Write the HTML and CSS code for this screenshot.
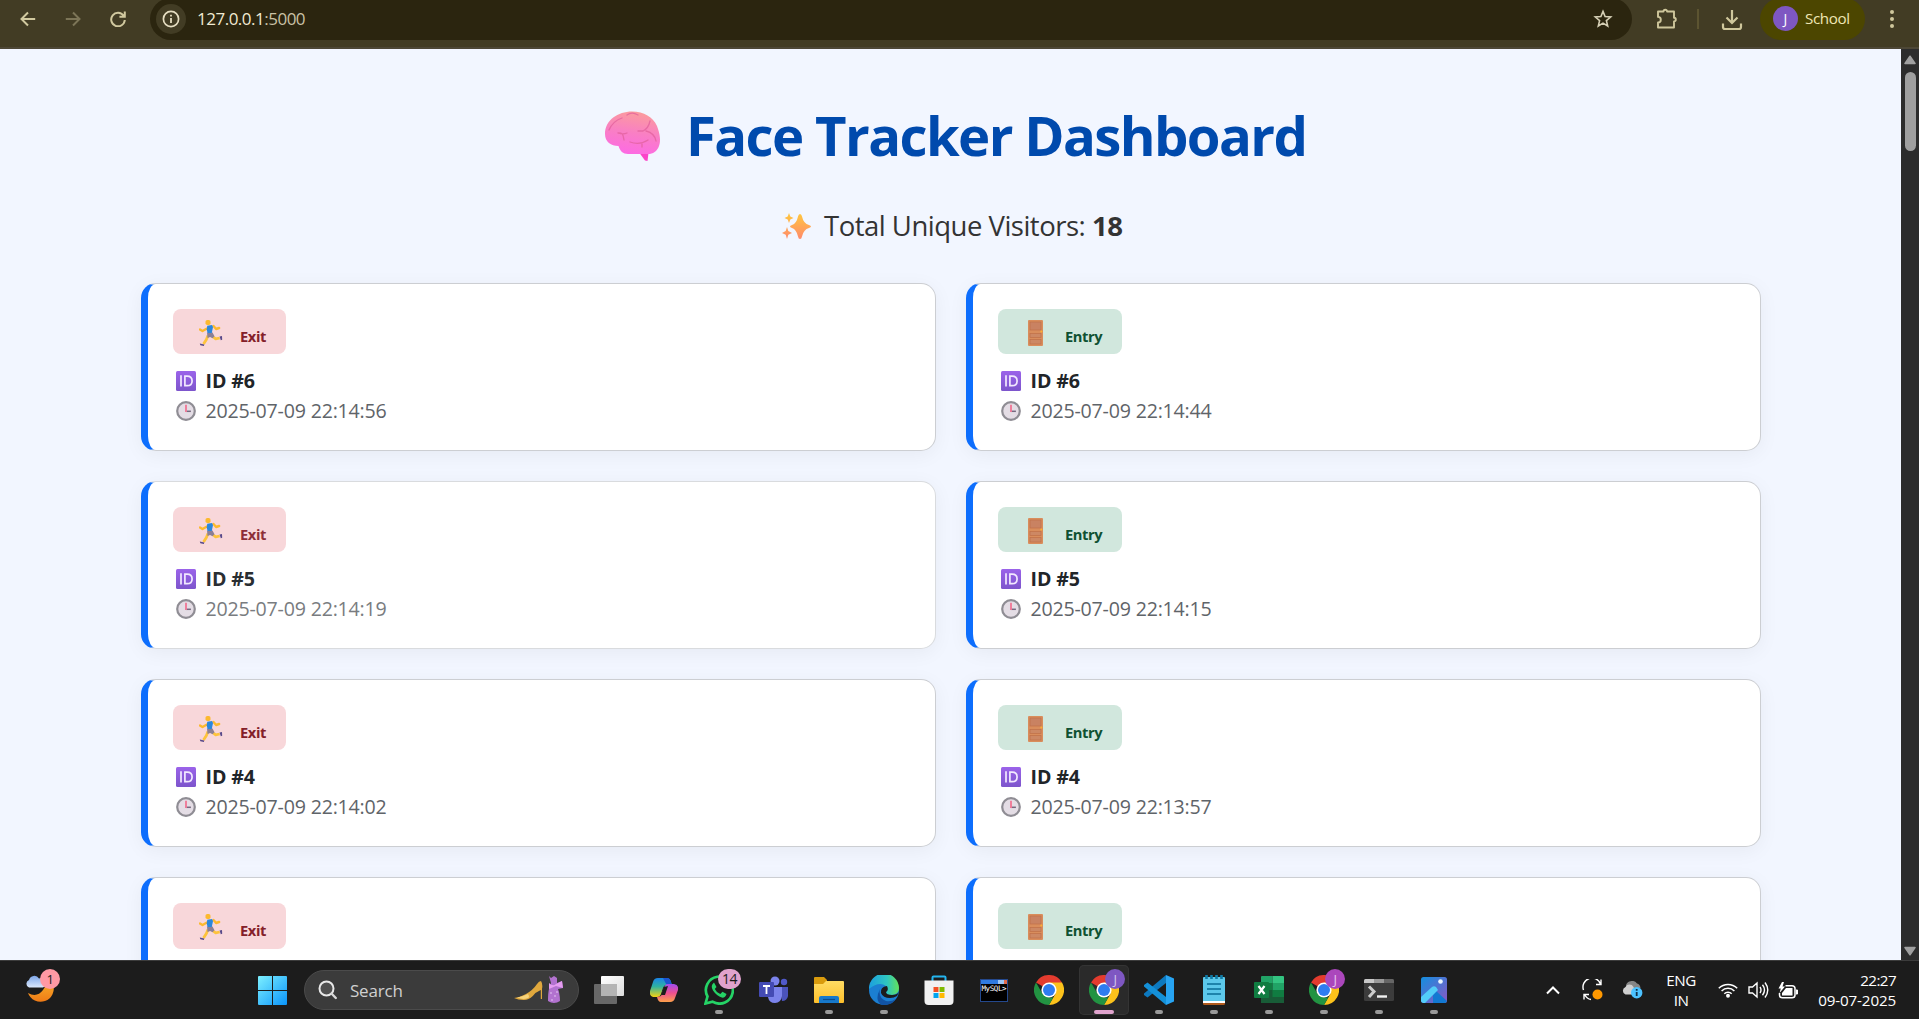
FILE: index.html
```html
<!DOCTYPE html>
<html lang="en">
<head>
<meta charset="utf-8">
<title>Face Tracker Dashboard</title>
<link rel="stylesheet" href="styles.css">
</head>
<body>
<svg class="defs" width="0" height="0" aria-hidden="true">
  <defs>
    <linearGradient id="gBrain" x1=".6" y1="0" x2=".4" y2="1"><stop offset="0" stop-color="#fb9c9c"/><stop offset=".5" stop-color="#f97fc4"/><stop offset="1" stop-color="#fd6ae4"/></linearGradient>
    <linearGradient id="gSpark" x1="0" y1="0" x2="0" y2="1"><stop offset="0" stop-color="#ffc83d"/><stop offset="1" stop-color="#ff8a6c"/></linearGradient>
    <linearGradient id="gId" x1="0" y1="0" x2="0" y2="1"><stop offset="0" stop-color="#9b63ea"/><stop offset="1" stop-color="#7d55cc"/></linearGradient>
    <linearGradient id="gWin" x1="0" y1="0" x2="1" y2="1"><stop offset="0" stop-color="#7df0ff"/><stop offset="1" stop-color="#0a94fa"/></linearGradient>
    <linearGradient id="gMoon" x1="0" y1="0" x2="0" y2="1"><stop offset="0" stop-color="#f7b32b"/><stop offset="1" stop-color="#ef7a16"/></linearGradient>
    <linearGradient id="gCloud" x1="0" y1="0" x2="0" y2="1"><stop offset="0" stop-color="#7fa8ea"/><stop offset="1" stop-color="#dbe8fb"/></linearGradient>
    <linearGradient id="gCopA" x1="0" y1="0" x2="0" y2="1"><stop offset="0" stop-color="#1a84e8"/><stop offset=".45" stop-color="#2fb3a0"/><stop offset="1" stop-color="#f5d312"/></linearGradient>
    <linearGradient id="gCopB" x1="0" y1="0" x2="0" y2="1"><stop offset="0" stop-color="#a14cf0"/><stop offset=".5" stop-color="#ee4f8f"/><stop offset="1" stop-color="#fda04a"/></linearGradient>
    <linearGradient id="gFold" x1="0" y1="0" x2="0" y2="1"><stop offset="0" stop-color="#ffdc63"/><stop offset="1" stop-color="#fdbf2b"/></linearGradient>
    <linearGradient id="gEdgeA" x1="0" y1="0" x2="1" y2="0"><stop offset="0" stop-color="#1c9fdf"/><stop offset=".6" stop-color="#2fc6c0"/><stop offset="1" stop-color="#63e25a"/></linearGradient>
    <linearGradient id="gPhoto" x1="0" y1="0" x2="1" y2="1"><stop offset="0" stop-color="#138fdf"/><stop offset="1" stop-color="#8b57c4"/></linearGradient>
    <linearGradient id="gView" x1="0" y1="0" x2="1" y2="1"><stop offset="0" stop-color="#fff"/><stop offset="1" stop-color="#dcdcdc"/></linearGradient>
    <symbol id="runner" viewBox="0 0 24 26">
      <path d="M8 8.500 3.500 11 1 9.500M14.500 6l2.600 3 3-1" fill="none" stroke="#fcb92f" stroke-width="2.400" stroke-linecap="round" stroke-linejoin="round"/>
      <path d="M9 15.500 7.400 19.500 4.500 24M13.500 16.500l3.200 2.400 4-.9" fill="none" stroke="#fdc33c" stroke-width="2.800" stroke-linejoin="round"/>
      <path d="M8 12.500h5.500l2 3.800-2 2-2.400-1.200-2.600.8z" fill="#8b7f96"/>
      <path d="M8.300 5.800 13 5 14 7 12.800 13H8.600L7.700 9.600z" fill="#2b87dc"/>
      <rect x="6.500" y="0" width="5" height="5" rx="1.800" fill="#fcb92f"/>
      <path d="M.8 23.400l4.500 1-.4 1.600-3.600-.8zM20.600 16.600l2.400-.6.200 3.700-1.400.5z" fill="#594a8a"/>
    </symbol>
    <symbol id="door" viewBox="0 0 15 26">
      <rect width="15" height="26" rx="1" fill="#d98d5c"/>
      <rect x="2" y="2" width="11" height="8" fill="#c98262" stroke="#bf7048" stroke-width=".7"/>
      <rect x="2" y="13.500" width="11" height="4" fill="#cd8864" stroke="#bf7048" stroke-width=".7"/>
      <rect x="2" y="19.500" width="11" height="4.500" fill="#cd8864" stroke="#bf7048" stroke-width=".7"/>
      <circle cx="13.300" cy="11.500" r="1" fill="#ffb02e"/>
    </symbol>
    <symbol id="idmark" viewBox="0 0 20 20">
      <rect width="20" height="20" rx="1.500" fill="url(#gId)"/>
      <path d="M5 4.300v11.200M8.900 5.100v9.600h2.200c3.600 0 5-2 5-4.800s-1.400-4.800-5-4.800z" fill="none" stroke="#f2e9ff" stroke-width="1.700"/>
    </symbol>
    <symbol id="clock" viewBox="0 0 20 20">
      <circle cx="10" cy="10" r="8.800" fill="#e4dde5" stroke="#8f8d94" stroke-width="2.200"/>
      <path d="M9.500 10.300h5.400" stroke="#75697f" stroke-width="1.500"/><path d="M10 11V3.800" stroke="#f07a98" stroke-width="1.900"/>
    </symbol>
    <symbol id="chrome" viewBox="0 0 30 30">
      <path d="M15 15 2 7.500A15 15 0 0 1 28 7.500z" fill="#e33b2e"/>
      <path d="M15 7.500H28A15 15 0 0 1 15 30L21.500 18.700z" fill="#fcc21b"/>
      <path d="M15 30A15 15 0 0 1 2 7.500L8.500 18.700 15 22.500h4.300z" fill="#229342"/>
      <circle cx="15" cy="15" r="7.600" fill="#fff"/><circle cx="15" cy="15" r="6" fill="#2f7cf0"/>
    </symbol>
  </defs>
</svg>

<header class="toolbar">
  <nav class="nav">
    <svg width="16" height="16" viewBox="0 0 16 16" class="stroke"><path d="M15.200 8H1.800M8 1.500 1.500 8 8 14.500"/></svg>
    <svg width="16" height="16" viewBox="0 0 16 16" class="stroke dim"><path d="M.8 8h13.400M8 1.500 14.500 8 8 14.500"/></svg>
    <svg width="16" height="16" viewBox="0 0 16 16" class="stroke"><path d="M13.600 4.600A6.800 6.800 0 1 0 14.800 9M14.800.6v5.200H9.400"/></svg>
  </nav>
  <div class="address">
    <span class="info"><svg width="18" height="18" viewBox="0 0 18 18"><circle cx="9" cy="9" r="7.600" fill="none" stroke="#e6dec2" stroke-width="1.700"/><path d="M9 8v5M9 4.800v1.800" stroke="#e6dec2" stroke-width="1.800"/></svg></span>
    <span class="url">127.0.0.1<span>:5000</span></span>
    <svg class="star" width="20" height="20" viewBox="0 0 20 20"><path d="m10 2.400 2.100 5.100 5.600.5-4.300 3.600 1.300 5.400L10 14.100 5.300 17l1.300-5.400L2.300 8l5.600-.5z" fill="none" stroke="#d5cfb5" stroke-width="1.600"/></svg>
  </div>
  <svg class="puzzle" width="22" height="22" viewBox="0 0 22 22"><path d="M2 3.500h5.500a1.800 1.800 0 0 1 3.600 0H18v6.300a1.800 1.800 0 0 1 0 3.600V19.500H2v-5a2.800 2.800 0 0 0 0-5.600z" fill="none" stroke="#cfc79c" stroke-width="1.900" stroke-linejoin="round"/></svg>
  <i class="divider"></i>
  <svg class="download" width="22" height="22" viewBox="0 0 22 22"><path d="M11 1v12.500M5.500 8.500 11 14l5.500-5.500M2 14.500V18q0 2 2 2h14q2 0 2-2v-3.500" fill="none" stroke="#cfc79c" stroke-width="2.200"/></svg>
  <div class="profile"><span class="avatar">J</span><span class="profile-name">School</span></div>
  <svg class="more" width="4" height="20" viewBox="0 0 4 20" fill="#cfc79c"><circle cx="2" cy="3" r="2"/><circle cx="2" cy="10" r="2"/><circle cx="2" cy="17" r="2"/></svg>
</header>

<div class="viewport">
  <main class="page">
    <h1 class="title">
      <svg width="56" height="50" viewBox="0 0 56 50"><path d="M34.500 42h9l-1 8-2.500-.5z" fill="#fb45c8"/><path d="M27 .5C39 .5 48 6 52 15c3 8 4 15 2 20-2 5.500-6 8-11 8H23c-5 0-8-3-9.500-8C6 35 0 31 0 23 0 9 13 .5 27 .5z" fill="url(#gBrain)"/><g fill="none" stroke="#e2609c" stroke-width="1.300" stroke-linecap="round" opacity=".75"><path d="M4 19c3-7 7-10 13-12M13 22c5 0 5 1 6 7M13 22c3 1 7 1 9 0M22 4c4-3 7-2 11 0M45 10c-1 5-3 8-7 10h-5M41 20c4 1 9 4 10 10M25 31c6 2 12 2 18-2M37 33v3"/></g></svg>
      <span>Face Tracker Dashboard</span>
    </h1>
    <p class="visitors">
      <svg width="29" height="27" viewBox="0 0 29 27" fill="url(#gSpark)"><path d="M18 1q1.500 0 2 2.500 1.500 7 7 8.500 2 .6 2 1.500t-2 1.500q-5.500 1.500-7 8.500-.5 2.500-2 2.500t-2-2.500q-1.500-7-6-8.500-2-.6-2-1.500t2-1.500q4.500-1.500 6-8.500Q16.500 1 18 1zM7 0l1.300 3.500L11.500 5 8.300 6.500 7 10 5.700 6.500 2.500 5l3.200-1.500zM5 14l1.300 4L10 20l-3.700 1.800L5 26l-1.300-4.200L0 20l3.700-2z"/></svg>
      <span>Total Unique Visitors: <b>18</b></span>
    </p>
    <section class="grid">
      <article class="card"><div class="badge exit"><svg width="24" height="26"><use href="#runner"/></svg><b>Exit</b></div><div class="line id"><svg width="20" height="20"><use href="#idmark"/></svg><b>ID #6</b></div><div class="line time"><svg width="20" height="20"><use href="#clock"/></svg><span>2025-07-09 22:14:56</span></div></article>
      <article class="card"><div class="badge entry"><svg width="15" height="26"><use href="#door"/></svg><b>Entry</b></div><div class="line id"><svg width="20" height="20"><use href="#idmark"/></svg><b>ID #6</b></div><div class="line time"><svg width="20" height="20"><use href="#clock"/></svg><span>2025-07-09 22:14:44</span></div></article>
      <article class="card fading"><div class="badge exit"><svg width="24" height="26"><use href="#runner"/></svg><b>Exit</b></div><div class="line id"><svg width="20" height="20"><use href="#idmark"/></svg><b>ID #5</b></div><div class="line time"><svg width="20" height="20"><use href="#clock"/></svg><span>2025-07-09 22:14:19</span></div></article>
      <article class="card"><div class="badge entry"><svg width="15" height="26"><use href="#door"/></svg><b>Entry</b></div><div class="line id"><svg width="20" height="20"><use href="#idmark"/></svg><b>ID #5</b></div><div class="line time"><svg width="20" height="20"><use href="#clock"/></svg><span>2025-07-09 22:14:15</span></div></article>
      <article class="card"><div class="badge exit"><svg width="24" height="26"><use href="#runner"/></svg><b>Exit</b></div><div class="line id"><svg width="20" height="20"><use href="#idmark"/></svg><b>ID #4</b></div><div class="line time"><svg width="20" height="20"><use href="#clock"/></svg><span>2025-07-09 22:14:02</span></div></article>
      <article class="card"><div class="badge entry"><svg width="15" height="26"><use href="#door"/></svg><b>Entry</b></div><div class="line id"><svg width="20" height="20"><use href="#idmark"/></svg><b>ID #4</b></div><div class="line time"><svg width="20" height="20"><use href="#clock"/></svg><span>2025-07-09 22:13:57</span></div></article>
      <article class="card"><div class="badge exit"><svg width="24" height="26"><use href="#runner"/></svg><b>Exit</b></div></article>
      <article class="card"><div class="badge entry"><svg width="15" height="26"><use href="#door"/></svg><b>Entry</b></div></article>
    </section>
  </main>
  <aside class="scrollbar">
    <svg width="12" height="10" viewBox="0 0 12 10"><path d="M6 1.200 11 8.500H1z" fill="#a0a0a0" stroke="#a0a0a0" stroke-linejoin="round" stroke-width="1.500"/></svg>
    <i class="thumb"></i>
    <svg class="down" width="12" height="10" viewBox="0 0 12 10"><path d="M6 8.800 11 1.500H1z" fill="#a0a0a0" stroke="#a0a0a0" stroke-linejoin="round" stroke-width="1.500"/></svg>
  </aside>
</div>

<footer class="taskbar">
  <div class="weather">
    <svg width="30" height="30" viewBox="0 0 30 30"><path d="M28 10A12.500 12.500 0 1 1 3 19q9 5 15-3 4-5 2-11z" fill="url(#gMoon)"/><path d="M4 13.500a4 4 0 0 1 0-7.500 5.500 5.500 0 0 1 10-1.500 4.500 4.500 0 0 1 4 9z" fill="url(#gCloud)"/></svg>
    <span class="count pink">1</span>
  </div>
  <svg class="start" width="29" height="29" viewBox="0 0 29 29"><path d="M0 1q0-1 1-1h13v14H0zM15 0h13q1 0 1 1v13H15zM0 15h14v14H1q-1 0-1-1zM15 15h14v13q0 1-1 1H15z" fill="url(#gWin)"/></svg>
  <div class="search">
    <svg width="19" height="20" viewBox="0 0 19 20"><circle cx="8.500" cy="8.500" r="7" fill="#505050" stroke="#e8e8e8" stroke-width="2"/><path d="m13.500 13.500 4.300 4.500" stroke="#d8d8d8" stroke-width="2.400" stroke-linecap="round"/></svg>
    <span>Search</span>
    <svg class="gifts" width="50" height="30" viewBox="0 0 50 30"><path d="M0 23q7-1 12-4 7-4 11-10 2-3 4-3 2 3 1 8v10h-1.200V15q-5 2-8 6-4 4-9 4-6 0-10-2z" fill="#e0a83d"/><path d="M3 22.500q6-1 11-3.500 2 3 0 4-5 2-11-.5z" fill="#f6d27a"/><path d="M35 1l2 2 3-2 3 2v5l5-2 1 7-5 1 1 3q1 5 1 9-6 4-12 0 0-8 1-12l2-6z" fill="#b272cf"/><path d="M35 8q4 4 7 1l6-3 1 7-7-2-7 3z" fill="#e59df0"/><g fill="#ead0f5"><circle cx="37" cy="18" r=".8"/><circle cx="41" cy="21" r=".8"/><circle cx="38" cy="25" r=".8"/><circle cx="43" cy="17" r=".8"/></g></svg>
  </div>
  <div class="apps">
    <div class="app"><svg width="30" height="28" viewBox="0 0 30 28"><rect x="7" y="0" width="23" height="20" rx="1" fill="url(#gView)"/><path d="M0 9q0-1 1-1h6v11q0 1 1 1h15v7q0 1-1 1H1q-1 0-1-1z" fill="#686868"/><path d="M7 8h16v12H7z" fill="#b4b4b4"/></svg></div>
    <div class="app"><svg width="28" height="26" viewBox="0 0 28 26"><path d="M8 1h9q3 0 4 4l1 3h-5q-3 0-4 3l-2 6q-1 3-4 3H3q-4-1-3-6L3 5q1-4 5-4z" fill="url(#gCopA)"/><path d="M13 1h4q3 0 4 4l1 3h-4q-2 0-3-3z" fill="#1b54d0"/><path d="M20 25h-9q-3 0-4-5l4-1 3-8q1-4 4-4h6q5 1 4 6l-3 8q-1 4-5 4z" fill="url(#gCopB)"/><path d="M14 10l4-1-3 9h-4z" fill="#1c1c1c"/></svg></div>
    <div class="app open"><svg width="30" height="30" viewBox="0 0 30 30"><path d="M1.500 28.500 3.500 21.500A13.500 13.500 0 1 1 8.500 26.700z" fill="none" stroke="#25d366" stroke-width="2.700"/><path d="M10 7.500q-4 3-1 8 4 6 9.500 7.200 3 0 4-3.700l-4-2.300-2.200 2.400q-4-1.800-5.500-5.200l1.700-2z" fill="#25d366"/></svg><span class="count rose">14</span></div>
    <div class="app"><svg width="30" height="28" viewBox="0 0 30 28"><circle cx="16" cy="5" r="4.500" fill="#7b83eb"/><circle cx="25" cy="6" r="3.200" fill="#5059c9"/><path d="M21 11h8v9q-1 5-6 5z" fill="#4b53bc"/><path d="M9 11h14v9q-1 7-7 7t-7-6z" fill="#7b83eb"/><rect x="0" y="6" width="15" height="15" rx="1" fill="#444bb4"/><path d="M4 10h7M7.500 10v8" stroke="#fff" stroke-width="1.800"/></svg></div>
    <div class="app open"><svg width="30" height="28" viewBox="0 0 30 28"><path d="M0 2q0-1 1-1h9l3 3v5H0z" fill="#d99b0d"/><path d="M0 8h9l3-3h17q1 0 1 1v20q0 1-1 1H1q-1 0-1-1z" fill="url(#gFold)"/><path d="M5 27v-5q0-2 2-2h16q2 0 2 2v5z" fill="#1779cb"/><path d="M9 23.500h12" stroke="#0c4c8c" stroke-width="1.200"/></svg></div>
    <div class="app open"><svg width="30" height="30" viewBox="0 0 30 30"><circle cx="15" cy="15" r="15" fill="#1b7fd2"/><path d="M0 14A15 15 0 0 1 30 13q0 6-7 7-6 0-6-3 3-3 0-6-7-5-17 3z" fill="url(#gEdgeA)"/><path d="M11 14q-2 9 6 12 5 1 10-2-5 7-14 6Q5 26 11 14z" fill="#1153a4"/><path d="M18 11q-7 1-6 7 2 5 9 5 4 0 7-2l2-4q-2 3-7 3-6 0-6-3 3-2 1-6z" fill="#1c1c1c"/></svg></div>
    <div class="app"><svg class="store" width="30" height="30" viewBox="0 0 30 30"><path d="M8.500 6V2.500q0-1 1-1h11q1 0 1 1V6" fill="none" stroke="#24b5ef" stroke-width="2"/><path d="M.5 5.500h29V26q0 4-4 4h-21q-4 0-4-4z" fill="#f1f1f1"/><path d="M9.500 12h5v5h-5z" fill="#f25022"/><path d="M15.500 12h5v5h-5z" fill="#7fba00"/><path d="M9.500 18h5v5h-5z" fill="#00a4ef"/><path d="M15.500 18h5v5h-5z" fill="#ffb900"/></svg></div>
    <div class="app"><span class="mysql"><i></i><span>MySQL&gt;</span></span></div>
    <div class="app"><svg width="30" height="30"><use href="#chrome"/></svg></div>
    <div class="app open active"><svg width="30" height="30"><use href="#chrome"/></svg><span class="count violet">J</span></div>
    <div class="app open"><svg width="30" height="30" viewBox="0 0 30 30"><path d="M22 0v8L3.500 22.500 0 20v-1.500z" fill="#0d79bf"/><path d="M22 30v-8L3.500 7.500 0 10v1.500z" fill="#1490d8"/><path d="M22 0 30 3.500v23L22 30z" fill="#27a4f2"/></svg></div>
    <div class="app open"><svg width="22" height="30" viewBox="0 0 22 30"><rect y="20" width="22" height="10" rx="1.500" fill="#b05a1c"/><rect y="18" width="22" height="10" fill="#fff"/><path d="M0 3q0-1 1-1h20q1 0 1 1v23H0z" fill="#5cc8ea"/><path d="M4 9h14M4 14h14M4 19h14" stroke="#0a6e96" stroke-width="1.700"/><path d="M3.500 0v4M8.500 0v4M13.500 0v4M18.500 0v4" stroke="#0f7ba6" stroke-width="2.600"/></svg></div>
    <div class="app open"><svg width="30" height="28" viewBox="0 0 30 28"><path d="M7 1q0-1 1-1h10.500v7H7z" fill="#21a366"/><path d="M18.500 0H29q1 0 1 1v6H18.500z" fill="#33c481"/><path d="M7 7h11.500v7H7z" fill="#107c41"/><path d="M18.500 7H30v7H18.500z" fill="#21a366"/><path d="M7 14h23v13H7z" fill="#185c37"/><path d="M18.500 14H30v7H18.500z" fill="#107c41"/><rect y="6" width="15" height="16" rx="1" fill="#107c41"/><path d="m4.500 10 6 8M10.500 10l-6 8" stroke="#fff" stroke-width="2.200"/></svg></div>
    <div class="app open"><svg width="30" height="30"><use href="#chrome"/></svg><span class="count purple">J</span></div>
    <div class="app open"><svg width="30" height="22" viewBox="0 0 30 22"><rect width="30" height="22" rx="1.500" fill="#3c3c3c"/><path d="M0 4V1.500Q0 0 1.500 0H10v4z" fill="#c8c8c8"/><path d="M10 0h10v4H10z" fill="#9a9a9a"/><path d="M20 0h8.500Q30 0 30 1.500V4H20z" fill="#666"/><path d="m5 7.500 5 5-5 5.500" fill="none" stroke="#ccc" stroke-width="3"/><path d="M13 17.500h10" stroke="#f2f2f2" stroke-width="2.400"/></svg></div>
    <div class="app open"><svg width="26" height="26" viewBox="0 0 26 26"><rect width="26" height="26" rx="2.500" fill="url(#gPhoto)"/><path d="m12 18 3-4 11 10q-1 2-2 2H12z" fill="#1278d2"/><path d="M0 20 11 10q2-1.500 4 0l2 3L4 26H2q-2-1-2-2z" fill="#52cdf9"/><circle cx="19.500" cy="4.500" r="2.300" fill="#e9f6ff"/></svg></div>
  </div>
  <div class="tray">
    <svg class="chev" width="14" height="9" viewBox="0 0 14 9"><path d="m1 7.500 6-6 6 6" fill="none" stroke="#fff" stroke-width="2"/></svg>
    <svg class="sync" width="22" height="22" viewBox="0 0 22 22"><path d="M1.500 11A9 9 0 0 1 18.500 5M19 .5V5.500H14M9 20.500Q5 20 2.500 15.500M2 20.500v-5h5" fill="none" stroke="#fff" stroke-width="1.400"/><circle cx="15.500" cy="15.500" r="5" fill="#ff9800"/></svg>
    <svg class="cloud" width="21" height="18" viewBox="0 0 21 18"><path d="M4 6a6 5.500 0 0 1 11-3.500q3 .5 3.500 4.500l-9 3z" fill="#858585"/><path d="M3.500 13.500a4 4 0 0 1 0-7.500 4.500 4.500 0 0 1 8 0l3 7.500z" fill="#cfcfcf"/><circle cx="14.700" cy="11.800" r="5.700" fill="#4cc2ff"/><path d="M14.700 11v4M14.700 8v1.800" stroke="#10314a" stroke-width="1.800"/></svg>
    <div class="lang"><span>ENG</span><span>IN</span></div>
    <svg class="wifi" width="20" height="16" viewBox="0 0 20 16" fill="none" stroke="#fff" stroke-width="1.500"><path d="M.8 6.200a13 13 0 0 1 18.400 0M3.600 9a9 9 0 0 1 12.800 0M6.300 11.700a5.200 5.200 0 0 1 7.400 0"/><circle cx="10" cy="13.800" r="1.200" fill="#fff"/></svg>
    <svg class="sound" width="21" height="18" viewBox="0 0 21 18" fill="none" stroke="#fff" stroke-width="1.400"><path d="M1 6h3.500L9 2v14l-4.500-4H1zM12 6q2 3 0 6M14.500 3.800q4 5.200 0 10.400M17 1.500q5.500 7.500 0 15"/></svg>
    <svg class="battery" width="21" height="17" viewBox="0 0 21 17"><path d="M7.500 3.700H14q3 0 3 2.800V13q0 2.800-3 2.800H4.500q-3 0-3-2.800v-2" fill="none" stroke="#fff" stroke-width="1.500"/><path d="M8 6h6.500v7.500H4V11z" fill="#fff"/><path d="M18 8h1.500v4H18" stroke="#fff" fill="#fff"/><path d="M4 0 .5 6.500h2.300L1.500 11 7 4.500H4.500L6 0z" fill="#fff"/></svg>
    <div class="datetime"><span>22:27</span><span>09-07-2025</span></div>
  </div>
</footer>
</body>
</html>
```
FILE: styles.css
```css
* { box-sizing: border-box; }
body { margin: 0; height: 1019px; overflow: hidden; display: flex; flex-direction: column; font-family: "Open Sans", "Noto Sans", sans-serif; background: #f2f6ff; }
svg { display: block; flex: none; }
.defs { position: absolute; }

.toolbar { height: 49px; flex: none; display: flex; align-items: flex-start; background: #423c24; border-bottom: 2px solid #4d4736; }
.nav { width: 150px; padding: 11px 0 0 20px; display: flex; gap: 29px; flex: none; }
.stroke { fill: none; stroke: #d1c99f; stroke-width: 2; }
.stroke.dim { stroke: #7c7557; }
.address { width: 1482px; height: 42px; margin-top: -2px; padding: 0 19px 0 6px; border-radius: 21px; background: #2b250f; display: flex; align-items: center; flex: none; }
.info { width: 30px; height: 30px; border-radius: 50%; background: #423c24; display: grid; place-items: center; }
.url { margin-left: 11px; flex: 1; font-size: 17px; line-height: 24px; letter-spacing: -.5px; color: #f1ead2; }
.url span { color: #c9c2a6; }
.puzzle { margin: 8px 0 0 24px; }
.divider { width: 2px; height: 20px; margin: 9px 0 0 19px; background: #5c5431; }
.download { margin: 9px 0 0 22px; }
.profile { width: 105px; height: 42px; margin: -2px 0 0 17px; padding: 0 0 1px 13px; border-radius: 21px; background: #4c4600; display: flex; align-items: center; }
.avatar { width: 25px; height: 25px; border-radius: 50%; background: #7e57c2; color: #fff; font-size: 14px; display: grid; place-items: center; }
.profile-name { margin-left: 7px; padding-bottom: 1px; font-size: 15.200px; letter-spacing: -.4px; color: #efe6b4; }
.more { margin: 9px 0 0 25px; }

.viewport { flex: 1; min-height: 0; display: flex; overflow: hidden; }
.page { flex: 1; min-width: 0; padding-top: 49px; overflow: hidden; background: #f2f6ff; }
.title { margin: 0; height: 76px; display: flex; align-items: center; padding-left: 605px; gap: 25px; color: #004aad; font-size: 54.500px; line-height: 74px; letter-spacing: -1.620px; white-space: nowrap; }
.title span { padding-bottom: 3px; }
.visitors { margin: 33px 0 0; height: 38px; display: flex; align-items: center; padding-left: 782px; gap: 13px; color: #333; font-size: 27.500px; line-height: 38px; letter-spacing: -.5px; white-space: nowrap; }
.grid { margin: 38px 0 0 141px; display: grid; grid-template-columns: 795px 795px; grid-auto-rows: 168px; gap: 30px; }
.card { background: #fff; border: 1px solid #ccced2; border-left: 7px solid #0d6efd; border-radius: 15px; padding: 25px; box-shadow: 0 4px 20px rgba(0,0,0,.05); display: flex; flex-direction: column; align-items: flex-start; }
.badge { height: 46px; border-radius: 8px; display: flex; align-items: center; font-size: 14.700px; }
.badge svg { margin-top: 2px; }
.badge b { line-height: 20px; padding-top: 8px; letter-spacing: -.4px; }
.exit { width: 113px; padding-left: 26px; gap: 17px; background: #f8d7da; color: #842029; }
.entry { width: 124px; padding-left: 30px; gap: 22px; background: #d1e7dd; color: #0f5132; }
.line { height: 30px; padding-left: 3px; display: flex; align-items: center; gap: 9.500px; font-size: 19.600px; line-height: 28px; white-space: nowrap; }
.line svg { margin-top: 2px; }
.line b, .line span { padding-top: 2px; }
.id { margin-top: 11px; color: #212529; letter-spacing: -.1px; }
.time { color: #5f6469; letter-spacing: -.2px; }
.fading { border-color: #d9dbde; border-left-color: #0d6efd; }
.fading .exit { color: #8d2f38; }
.fading .id { color: #2a2e32; }
.fading .time { color: #797c80; }

.scrollbar { width: 18px; padding: 6px 3px 4px; background: #2c2c2c; display: flex; flex-direction: column; align-items: center; }
.thumb { width: 11px; height: 79px; margin-top: 7px; border-radius: 6px; background: #9f9f9f; }
.down { margin-top: auto; }

.taskbar { height: 59px; flex: none; display: flex; align-items: center; background: #1c1c1c; border-top: 1px solid #3c3c3c; color: #fff; }
.weather { width: 258px; height: 58px; padding: 13px 0 0 25px; position: relative; flex: none; }
.count { position: absolute; display: grid; place-items: center; height: 20px; border-radius: 10px; color: #1c1c1c; font-size: 13px; line-height: 20px; letter-spacing: -.5px; }
.pink { left: 40px; top: 8px; width: 20px; background: #ff99a4; }
.rose { left: 24px; top: 4px; width: 23px; background: #e0a3cd; font-size: 14px; }
.violet { left: 26px; top: 4px; width: 20px; background: #7e57c2; color: #d3c4ec; }
.purple { left: 26px; top: 4px; width: 20px; background: #ab47bc; color: #e8c2ee; }
.search { width: 275px; height: 40px; margin-left: 17px; padding: 0 14px 0 13px; border: 1px solid #4b4b4b; border-radius: 20px; background: #3b3b3b; display: flex; align-items: center; flex: none; }
.search span { margin-left: 13px; font-size: 17px; letter-spacing: -.2px; color: #d0d0d0; }
.gifts { margin-left: auto; }
.apps { display: flex; margin-left: 2px; gap: 5px; padding-left: 3px; }
.app { width: 50px; height: 50px; position: relative; display: grid; place-items: center; border-radius: 5px; }
.app.active { background: #2a2a2a; box-shadow: inset 0 0 0 1px #343434; }
.open::after { content: ""; position: absolute; left: 21px; bottom: 1px; width: 8px; height: 4px; border-radius: 2px; background: #999; }
.active::after { left: 15px; width: 20px; background: #e0a3cd; }
.store, .mysql { margin-right: 1px; }
.mysql { width: 28px; height: 23px; background: #000; border: 1px solid #24488c; font: 7.500px/10px "DejaVu Sans Mono", monospace; letter-spacing: -.4px; color: #fff; overflow: hidden; }
.mysql i { display: block; height: 4px; background: linear-gradient(90deg, #2f7be0 65%, #9cc6f5 65% 88%, #e06a4a 88%); }
.mysql span { display: block; padding-left: 1px; }
.tray { flex: 1; display: flex; align-items: center; }
.chev { margin-left: 87px; }
.sync { margin-left: 22px; }
.cloud { margin-left: 18px; }
.lang { width: 40px; margin-left: 18px; text-align: center; font-size: 15.200px; line-height: 20px; letter-spacing: -.5px; display: flex; flex-direction: column; }
.wifi { margin-left: 17px; }
.sound { margin-left: 10px; }
.battery { margin-left: 9px; }
.datetime { margin-left: auto; margin-right: 23px; padding-bottom: 1px; display: flex; flex-direction: column; text-align: right; font-size: 15.200px; line-height: 20px; letter-spacing: -.150px; }
.datetime span:first-child { letter-spacing: -.6px; }
```
